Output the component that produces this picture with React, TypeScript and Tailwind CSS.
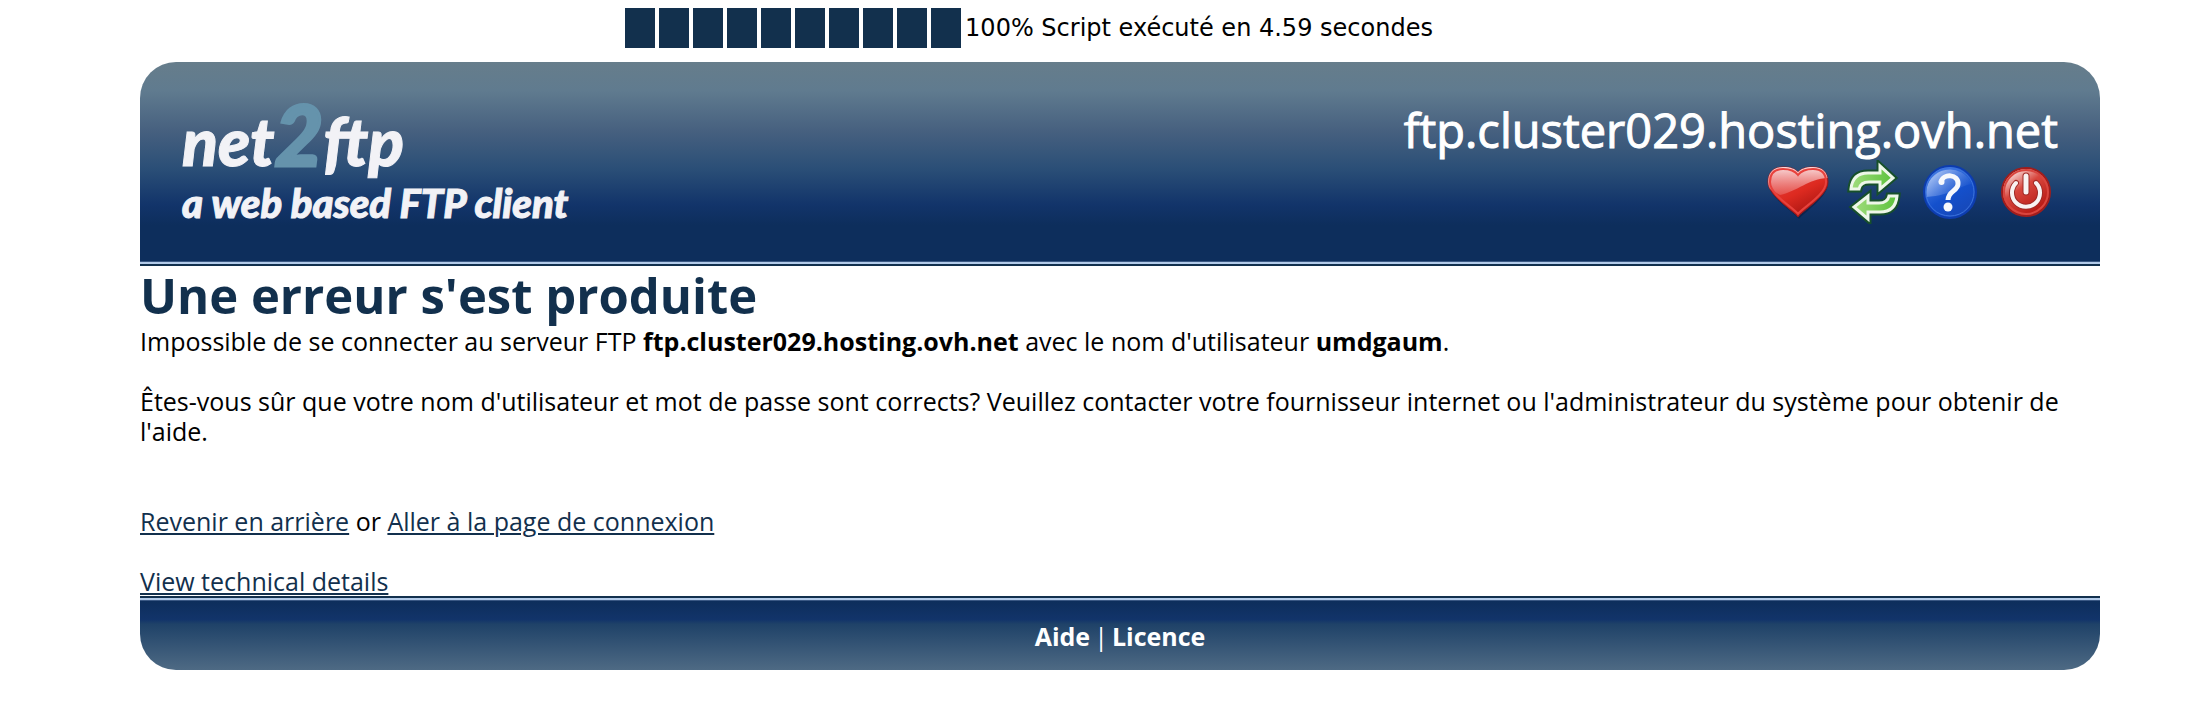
import { ReactNode } from 'react';

const blocks = [10, 20, 30, 40, 50, 60, 70, 80, 90, 100];

function HeartIcon() {
  return (
    <svg viewBox="0 0 64 56" className="w-16 h-14" aria-hidden="true">
      <defs>
        <linearGradient id="heart-body" x1="0" y1="0" x2="0.6" y2="1">
          <stop offset="0" stopColor="#e5484a" />
          <stop offset="0.6" stopColor="#dd2a20" />
          <stop offset="1" stopColor="#a81512" />
        </linearGradient>
        <linearGradient id="heart-shine" x1="0" y1="0" x2="0" y2="1">
          <stop offset="0" stopColor="#fbe9ea" stopOpacity="0.95" />
          <stop offset="1" stopColor="#ea6a66" stopOpacity="0.6" />
        </linearGradient>
        <clipPath id="heart-clip">
          <path d="M32 53C28 47 2 32 2 18C2 8 8 3 17 3C25 3 29 5 32 8C35 5 39 3 47 3C56 3 62 8 62 18C62 32 36 47 32 53Z" />
        </clipPath>
      </defs>
      <path d="M33 55C29 49 3 34 3 20L62 18C63 33 38 48 33 55Z" fill="#0b1c3c" opacity="0.6" />
      <path d="M32 53C28 47 2 32 2 18C2 8 8 3 17 3C25 3 29 5 32 8C35 5 39 3 47 3C56 3 62 8 62 18C62 32 36 47 32 53Z" fill="url(#heart-body)" stroke="#8f1a22" strokeWidth="1" />
      <path clipPath="url(#heart-clip)" d="M2 2H62V14C42 15 32 27 14 31L2 24Z" fill="url(#heart-shine)" />
      <path d="M32 50C28 44 4 31 4 18C4 9 9 5 17 5C25 5 29 7 32 11C35 7 39 5 47 5C55 5 60 9 60 18C60 31 36 44 32 50Z" fill="none" stroke="#e8413c" strokeWidth="2" />
    </svg>
  );
}

function RefreshIcon() {
  return (
    <svg viewBox="0 0 56 64" className="w-14 h-16" aria-hidden="true">
      <defs>
        <linearGradient id="arrow" x1="0" y1="0" x2="1" y2="0">
          <stop offset="0" stopColor="#a0dc7c" />
          <stop offset="1" stopColor="#5cc23c" />
        </linearGradient>
      </defs>
      {['M5 29C6 18 12 13 22 13H34V6L47 18L34 29V22H23C17 22 14 24 13 29Z', 'M51 36C50 47 44 52 34 52H22V59L8 47L22 36V43H33C39 43 42 41 43 36Z'].map((d) => (
        <g key={d}>
          <path d={d} fill="none" stroke="#17502a" strokeWidth="7" />
          <path d={d} fill="url(#arrow)" stroke="#edf6e8" strokeWidth="3" />
        </g>
      ))}
    </svg>
  );
}

function HelpIcon() {
  return (
    <svg viewBox="0 0 56 56" className="w-14 h-14" aria-hidden="true">
      <defs>
        <linearGradient id="help-body" x1="0.2" y1="0" x2="0.8" y2="1">
          <stop offset="0" stopColor="#4f86ea" />
          <stop offset="0.55" stopColor="#1450cc" />
          <stop offset="1" stopColor="#1746b4" />
        </linearGradient>
        <linearGradient id="help-shine" x1="0" y1="0" x2="1" y2="0.6">
          <stop offset="0" stopColor="#d3e2fd" />
          <stop offset="1" stopColor="#2f66d6" stopOpacity="0.2" />
        </linearGradient>
      </defs>
      <circle cx="28" cy="28" r="26" fill="url(#help-body)" stroke="#0d3cae" strokeWidth="2" />
      <path d="M4 29A24 24 0 0 1 50 20C38 21 32 31 4 33Z" fill="url(#help-shine)" />
      <circle cx="28" cy="28" r="24" fill="none" stroke="#3b72dc" strokeWidth="1" />
      <path d="M19 18C21 9 37 10 36 20C36 27 26 27 26 36" fill="none" stroke="#f6f8fc" strokeWidth="5" />
      <circle cx="19.5" cy="18" r="3" fill="#f6f8fc" />
      <circle cx="26" cy="43" r="4.5" fill="#f6f8fc" />
    </svg>
  );
}

function PowerIcon() {
  return (
    <svg viewBox="0 0 52 52" className="w-13 h-13" aria-hidden="true">
      <defs>
        <linearGradient id="power-body" x1="0.1" y1="0.1" x2="0.7" y2="1">
          <stop offset="0" stopColor="#fdf1f0" />
          <stop offset="0.4" stopColor="#d8463d" />
          <stop offset="1" stopColor="#b3140f" />
        </linearGradient>
      </defs>
      <circle cx="26" cy="26" r="24" fill="url(#power-body)" stroke="#a01d1c" strokeWidth="2" />
      <circle cx="26" cy="26" r="22" fill="none" stroke="#d9453e" strokeWidth="2" />
      <g fill="none" strokeLinecap="round">
        <path d="M16 17A14 14 0 1 0 36 17" stroke="#9f2a26" strokeWidth="6" />
        <path d="M16 17A14 14 0 1 0 36 17" stroke="#f8f2f2" strokeWidth="4" />
        <path d="M26 10V26" stroke="#9f2a26" strokeWidth="7" />
        <path d="M26 10V26" stroke="#f8f2f2" strokeWidth="5" />
      </g>
    </svg>
  );
}

const actions = [
  { href: '#bookmark', label: 'Signet', icon: HeartIcon },
  { href: '#refresh', label: 'Rafraîchir', icon: RefreshIcon },
  { href: '#help', label: 'Aide', icon: HelpIcon },
  { href: '#logout', label: 'Déconnexion', icon: PowerIcon },
];

function TextLink({ href, children }: { href: string; children: ReactNode }) {
  return (
    <a href={href} className="text-[#12304d] underline decoration-2 underline-offset-2">
      {children}
    </a>
  );
}

export default function App() {
  return (
    <div className="bg-white text-black font-['Open_Sans','Noto_Sans',sans-serif] text-[25px] leading-[30px]">
      {/* Progress */}
      <div className="flex items-center justify-center gap-1 pt-2 pr-32 font-['DejaVu_Sans',sans-serif] text-[24px]">
        {blocks.map((b) => (
          <span key={b} className="w-[30px] h-10 bg-[#12304d]" />
        ))}
        <span>100% Script exécuté en 4.59 secondes</span>
      </div>

      <div className="mt-[14px] ml-[140px] mr-[86px]">
        <header className="h-[204px] rounded-t-[36px] flex flex-col overflow-hidden bg-[linear-gradient(to_bottom,#667d8b_0%,#607b8f_14%,#46607f_34%,#2b4f77_52%,#12346a_70%,#0d2e5c_80%)]">
          <div className="flex-1 flex justify-between px-[42px]">
            <div className="pt-8 text-[#f2f2f6] font-['Lato',sans-serif] font-black italic [-webkit-text-stroke:1px_currentColor]">
              <div className="flex items-baseline text-[66px] leading-[80px]">
                net<span className="text-[#6593ac] text-[84px] leading-[80px] [-webkit-text-stroke:3px_currentColor]">2</span>ftp
              </div>
              <div className="text-[40px] leading-[44px]">a web based FTP client</div>
            </div>
            <div className="pt-[38px] text-white text-right">
              <div className="text-[47px] leading-[60px] [-webkit-text-stroke:1px_white]">ftp.cluster029.hosting.ovh.net</div>
              <div className="flex justify-end gap-3">
                {actions.map(({ href, label, icon: Icon }) => (
                  <a key={href} href={href} title={label} className="w-16 h-16 flex items-center justify-center">
                    <Icon />
                  </a>
                ))}
              </div>
            </div>
          </div>
          <div className="h-[5px] border-t border-b-2 border-t-[#3a5884] border-b-[#12304d] bg-[#b3cbe9]" />
        </header>

        <main>
          <h1 className="text-[49px] leading-[58px] pb-[2px] font-bold text-[#12304d]">Une erreur s'est produite</h1>
          <p>
            Impossible de se connecter au serveur FTP <b>ftp.cluster029.hosting.ovh.net</b> avec le nom d'utilisateur <b>umdgaum</b>.
          </p>
          <p className="mt-[30px]">
            Êtes-vous sûr que votre nom d'utilisateur et mot de passe sont corrects? Veuillez contacter votre fournisseur internet ou l'administrateur du système pour obtenir de l'aide.
          </p>
          <p className="mt-[60px]">
            <TextLink href="#back">Revenir en arrière</TextLink> or <TextLink href="#login">Aller à la page de connexion</TextLink>
          </p>
          <p className="mt-[30px]">
            <TextLink href="#details">View technical details</TextLink>
          </p>
        </main>

        <footer className="h-[74px] rounded-b-[36px] overflow-hidden bg-[linear-gradient(to_bottom,#0d2e5c_8%,#12346a_32%,#1f4268_38%,#4e6a84_100%)] text-white">
          <div className="h-[5px] border-t-2 border-b border-t-[#12304d] border-b-[#3a5884] bg-[#b3cbe9]" />
          <nav className="flex justify-center gap-1 pt-5">
            <a href="#aide" className="font-bold">Aide</a>
            <span>|</span>
            <a href="#licence" className="font-bold">Licence</a>
          </nav>
        </footer>
      </div>
    </div>
  );
}
